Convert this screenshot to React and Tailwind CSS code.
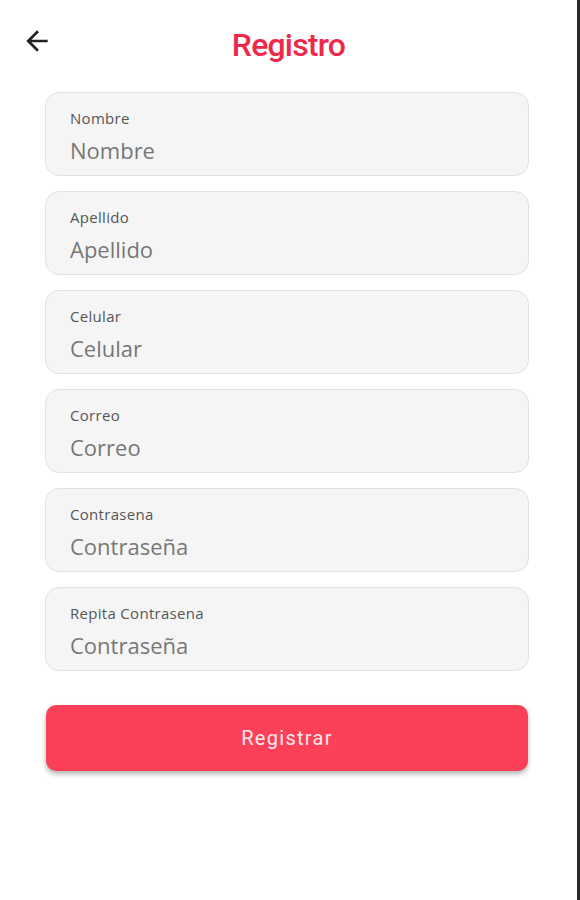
const FIELDS = [
  { label: 'Nombre', placeholder: 'Nombre' },
  { label: 'Apellido', placeholder: 'Apellido' },
  { label: 'Celular', placeholder: 'Celular' },
  { label: 'Correo', placeholder: 'Correo' },
  { label: 'Contrasena', placeholder: 'Contraseña' },
  { label: 'Repita Contrasena', placeholder: 'Contraseña' },
];

const Field = ({ label, placeholder }) => (
  <div className="flex h-[84px] flex-col rounded-[14px] border border-[#e2e2e2] bg-[#f5f5f5] px-6 pt-[16px] font-['Open_Sans',sans-serif]">
    <span className="text-[15px] leading-[19px] tracking-[0.3px] text-[#555]">{label}</span>
    <span className="mt-[8px] text-[22px] leading-[28px] text-[#777]">{placeholder}</span>
  </div>
);

export default function App() {
  return (
    <div className="flex min-h-[900px] w-[580px] bg-white font-['Roboto','Liberation_Sans',sans-serif]">
      <div className="flex flex-1 flex-col">
        <header className="relative flex h-[92px] justify-center pt-[26px]">
          <button className="absolute left-[21px] top-[25px] text-[#222]">
            <svg width="32" height="32" viewBox="0 0 24 24" fill="currentColor">
              <path d="M20 11H7.83l5.59-5.59L12 4l-8 8 8 8 1.41-1.41L7.83 13H20v-2z" />
            </svg>
          </button>
          <h1 className="text-[32px] font-medium leading-[38px] tracking-[-0.8px] text-[#f0274a]">Registro</h1>
        </header>
        <form className="flex flex-col gap-[15px] pl-[45px] pr-[48px]">
          {FIELDS.map((f, i) => (
            <Field key={i} label={f.label} placeholder={f.placeholder} />
          ))}
          <button
            type="button"
            className="mx-[1px] mt-[19px] h-[66px] rounded-[10px] bg-[#fc4058] text-[20px] tracking-[1.3px] text-[#fde8ec] shadow-[0_3px_5px_rgba(0,0,0,0.3)]"
          >
            Registrar
          </button>
        </form>
      </div>
      <div className="w-[3px] bg-[#2a2a2a]" />
    </div>
  );
}
